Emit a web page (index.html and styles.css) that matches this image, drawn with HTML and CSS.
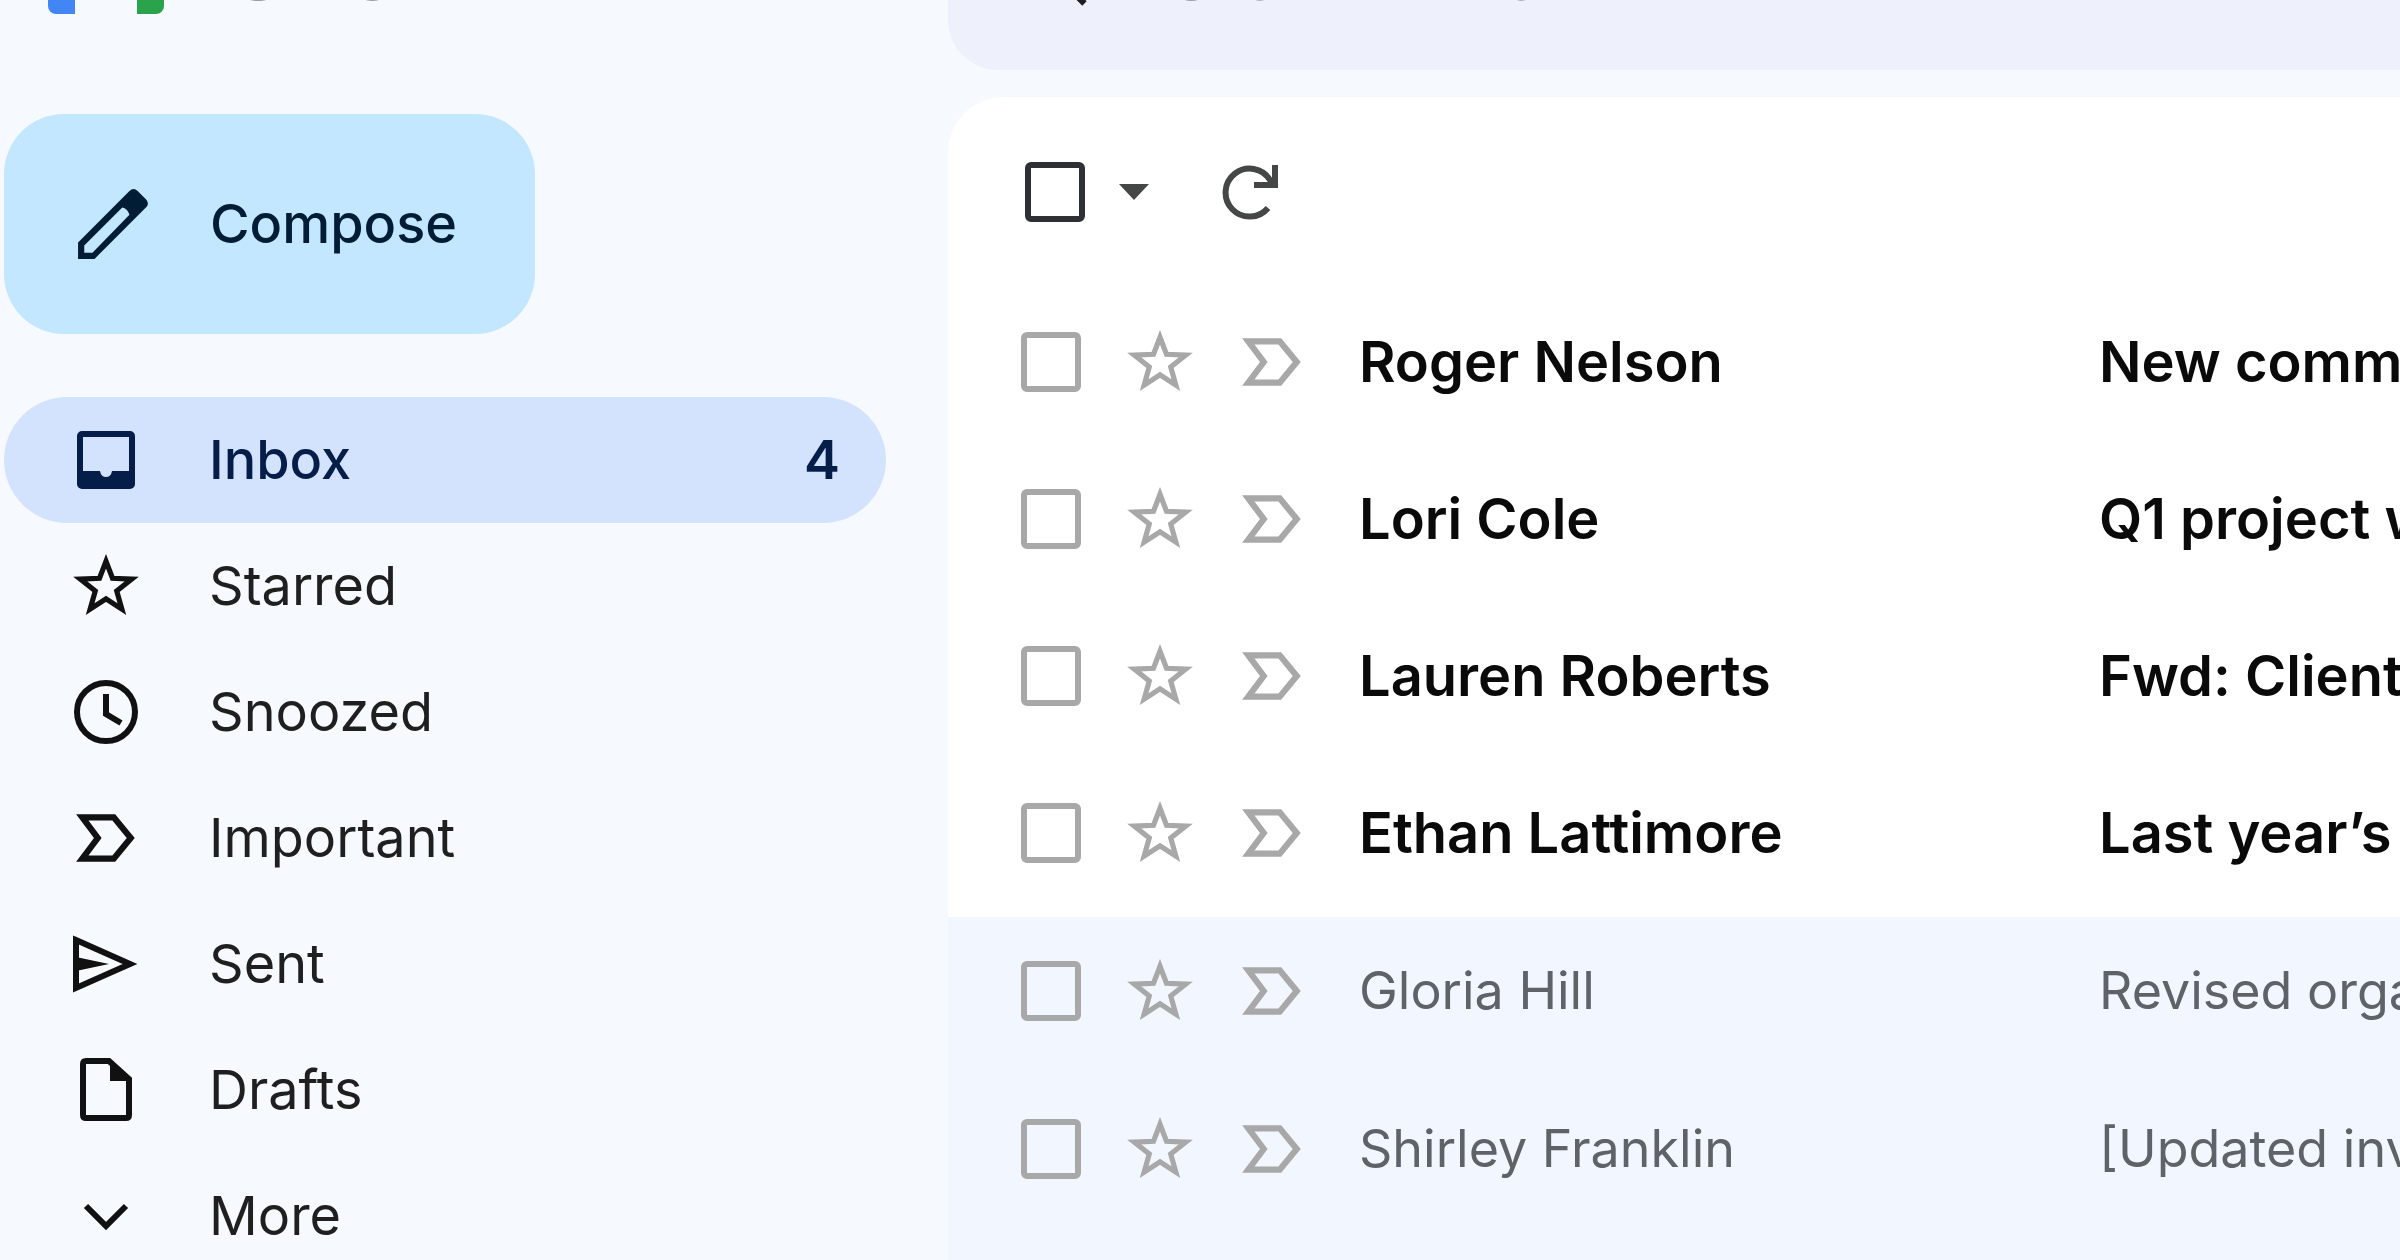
FILE: index.html
```html
<!DOCTYPE html>
<html lang="en">
<head>
<meta charset="utf-8">
<title>Gmail</title>
<link rel="stylesheet" href="styles.css">
</head>
<body>
<svg class="sprite" aria-hidden="true">
  <symbol id="star" viewBox="0 0 64 64"><path d="M32 8l6.300 16.500 18.700.800-14.600 11.500 5 17.700L32 44.500 16.600 54.500l5-17.700L7 25.300l18.700-.800z" fill="none" stroke="currentColor" stroke-width="5"/></symbol>
  <symbol id="marker" viewBox="0 0 64 64"><path d="M9 12h30.500L56 32 39.500 52H9l15-20z" fill="none" stroke="currentColor" stroke-width="6"/></symbol>
</svg>

<header class="topbar">
  <a class="brand" href="#">
    <svg class="logo" viewBox="0 -4 116 84" aria-hidden="true">
      <path d="M0 14h27v66H8a8 8 0 0 1-8-8z" fill="#4285f4"/>
      <path d="M89 14h27v58a8 8 0 0 1-8 8H89z" fill="#2ba24c"/>
      <path d="M0 15C0 0 16-5 27 4l31 22L89 4c11-9 27-4 27 11v13L58 60 0 28z" fill="#ea4335"/>
    </svg>
    <span>Gmail</span>
  </a>
  <label class="search">
    <svg class="search-icon" viewBox="0 0 72 72" aria-hidden="true"><path d="M44 44L68 68" stroke="#1f1f1f" stroke-width="7"/><circle cx="28" cy="28" r="20" fill="none" stroke="#1f1f1f" stroke-width="7"/></svg>
    <input type="search" placeholder="Search in mail" aria-label="Search in mail">
  </label>
</header>

<div class="layout">
  <aside class="sidebar">
    <button class="compose" type="button">
      <svg class="pencil" viewBox="0 0 72 72" aria-hidden="true">
        <path d="M2 54L52 4q4-4 8 0l8 8q4 4 0 8L18 70H2z" fill="#001d35"/>
        <path d="M8 57L45 20q5 1 7 7L16 64H8z" fill="#c2e7ff"/>
      </svg>
      <span>Compose</span>
    </button>
    <nav class="folders">
      <a class="folder active" href="#inbox">
        <svg class="icon" viewBox="0 0 66 66" aria-hidden="true"><path d="M9 4h48a5 5 0 0 1 5 5v48a5 5 0 0 1-5 5H9a5 5 0 0 1-5-5V9a5 5 0 0 1 5-5zm1 6v34h17q1 6 6 6t6-6h17V10z" fill="currentColor"/></svg>
        <span>Inbox</span><span class="count">4</span>
      </a>
      <a class="folder" href="#starred"><svg class="icon" aria-hidden="true"><use href="#star"/></svg><span>Starred</span></a>
      <a class="folder" href="#snoozed">
        <svg class="icon" viewBox="0 0 66 66" aria-hidden="true"><g fill="none" stroke="currentColor" stroke-width="6"><circle cx="33" cy="33" r="29"/><path d="M33 15v20l15 9"/></g></svg>
        <span>Snoozed</span>
      </a>
      <a class="folder" href="#important"><svg class="icon" aria-hidden="true"><use href="#marker"/></svg><span>Important</span></a>
      <a class="folder" href="#sent">
        <svg class="icon" viewBox="0 0 66 66" aria-hidden="true"><path d="M3 9L57 33 3 57z" fill="none" stroke="currentColor" stroke-width="6"/><path d="M3 26l33 7-33 7z" fill="currentColor"/></svg>
        <span>Sent</span>
      </a>
      <a class="folder" href="#drafts">
        <svg class="icon" viewBox="0 0 66 66" aria-hidden="true"><path d="M13 4h23l20 18v36q0 3-3 3H13q-3 0-3-3V7q0-3 3-3z" fill="none" stroke="currentColor" stroke-width="6"/><path d="M37 3l20 21H37z" fill="currentColor"/></svg>
        <span>Drafts</span>
      </a>
      <a class="folder" href="#more">
        <svg class="icon" viewBox="0 0 66 66" aria-hidden="true"><path d="M13 23l20 20 20-20" fill="none" stroke="currentColor" stroke-width="6"/></svg>
        <span>More</span>
      </a>
    </nav>
  </aside>

  <main class="panel">
    <div class="toolbar">
      <input class="box box-all" type="checkbox" aria-label="Select all">
      <button class="tool" type="button" aria-label="Select options"><svg class="caret" viewBox="0 0 30 16"><path d="M0 0h30L15 16z" fill="#444746"/></svg></button>
      <button class="tool" type="button" aria-label="Refresh"><svg class="refresh" viewBox="0 0 54 56"><path d="M43 44A24 24 0 1 1 45 16L50 21M50 1V21H29" fill="none" stroke="#444746" stroke-width="6"/></svg></button>
    </div>
    <ul class="mails unread">
      <li class="mail"><input class="box" type="checkbox" aria-label="Select Roger Nelson"><svg class="mark"><use href="#star"/></svg><svg class="mark"><use href="#marker"/></svg><span class="from">Roger Nelson</span><span class="subject">New comments</span></li>
      <li class="mail"><input class="box" type="checkbox" aria-label="Select Lori Cole"><svg class="mark"><use href="#star"/></svg><svg class="mark"><use href="#marker"/></svg><span class="from">Lori Cole</span><span class="subject">Q1 project wrap-up</span></li>
      <li class="mail"><input class="box" type="checkbox" aria-label="Select Lauren Roberts"><svg class="mark"><use href="#star"/></svg><svg class="mark"><use href="#marker"/></svg><span class="from">Lauren Roberts</span><span class="subject">Fwd: Client</span></li>
      <li class="mail"><input class="box" type="checkbox" aria-label="Select Ethan Lattimore"><svg class="mark"><use href="#star"/></svg><svg class="mark"><use href="#marker"/></svg><span class="from">Ethan Lattimore</span><span class="subject">Last year’s</span></li>
    </ul>
    <ul class="mails read">
      <li class="mail"><input class="box" type="checkbox" aria-label="Select Gloria Hill"><svg class="mark"><use href="#star"/></svg><svg class="mark"><use href="#marker"/></svg><span class="from">Gloria Hill</span><span class="subject">Revised organization</span></li>
      <li class="mail"><input class="box" type="checkbox" aria-label="Select Shirley Franklin"><svg class="mark"><use href="#star"/></svg><svg class="mark"><use href="#marker"/></svg><span class="from">Shirley Franklin</span><span class="subject">[Updated invitation]</span></li>
    </ul>
  </main>
</div>
</body>
</html>
```
FILE: styles.css
```css
* { box-sizing: border-box; }

body {
  margin: 0;
  height: 100vh;
  overflow: hidden;
  display: flex;
  flex-direction: column;
  background: #f6f9fe;
  color: #1f1f1f;
  font-family: Inter, Roboto, sans-serif;
  font-size: 54px;
  line-height: 64px;
}

.sprite { display: none; }
svg { display: block; flex: none; }
button { font: inherit; border: 0; background: none; padding: 0; }
a { color: inherit; text-decoration: none; }

.topbar {
  flex: none;
  display: grid;
  grid-template-columns: 948px 1fr;
  height: 190px;
  margin-top: -120px;
}

.brand {
  display: flex;
  align-items: center;
  gap: 64px;
  padding: 0 0 6px 48px;
  color: #9aa0a6;
  font-size: 78px;
}
.logo { width: 116px; height: 84px; }

.search {
  display: flex;
  align-items: center;
  gap: 84px;
  padding-left: 76px;
  border-radius: 50px 0 0 50px;
  background: #eef1fc;
}
.search-icon { width: 64px; height: 64px; }
.search input {
  flex: 1;
  min-width: 0;
  padding: 5px 0 0;
  border: 0;
  background: none;
  font: inherit;
  font-size: 60px;
}
.search input::placeholder { color: #9aa0a6; opacity: 1; }

.layout {
  flex: 1;
  display: grid;
  grid-template-columns: 944px 1fr;
  gap: 4px;
}

.sidebar { padding: 44px 58px 0 4px; }

.compose {
  display: flex;
  align-items: center;
  gap: 60px;
  height: 220px;
  padding: 0 78px 0 72px;
  border-radius: 60px;
  background: #c2e7ff;
  color: #001d35;
  font-weight: 500;
}
.pencil { width: 74px; height: 74px; }

.folders { margin-top: 63px; }
.folder {
  display: flex;
  align-items: center;
  gap: 70px;
  height: 126px;
  padding: 0 46px 0 69px;
  border-radius: 63px;
}
.icon { width: 66px; height: 66px; color: #111; }
.folder.active { background: #d3e3fd; color: #041e49; font-weight: 500; }
.folder.active .icon { color: #041e49; }
.count { margin-left: auto; font-weight: 600; }

.panel {
  margin-top: 27px;
  min-width: 0;
  overflow: hidden;
  border-radius: 56px 0 0 0;
  background: #fff;
}

.toolbar {
  display: flex;
  align-items: center;
  height: 191px;
  padding: 0 0 2px 77px;
}
.tool + .tool { margin-left: 76px; }
.box-all + .tool { margin-left: 34px; }
.caret { width: 30px; height: 16px; }
.refresh { width: 54px; height: 56px; overflow: visible; }

.box {
  appearance: none;
  flex: none;
  width: 60px;
  height: 60px;
  margin: 0;
  border: 6px solid #a8a8a8;
  border-radius: 6px;
}
.box-all { border-color: #2d3136; }

.mails {
  margin: 0;
  padding: 0;
  list-style: none;
  display: grid;
}
.mail {
  display: grid;
  grid-template-columns: 60px 66px 66px 694px 1fr;
  column-gap: 46px;
  align-items: center;
  height: 148px;
  padding-left: 73px;
  white-space: nowrap;
}
.mark { width: 66px; height: 66px; color: #a8a8a8; }
.from, .subject { padding-left: 8px; }
.unread { gap: 9px; padding-bottom: 10px; color: #0a0a0a; font-size: 56px; font-weight: 600; }
.read { gap: 10px; padding-bottom: 100px; background: #f2f6fe; color: #5f6368; font-size: 52px; }
```
